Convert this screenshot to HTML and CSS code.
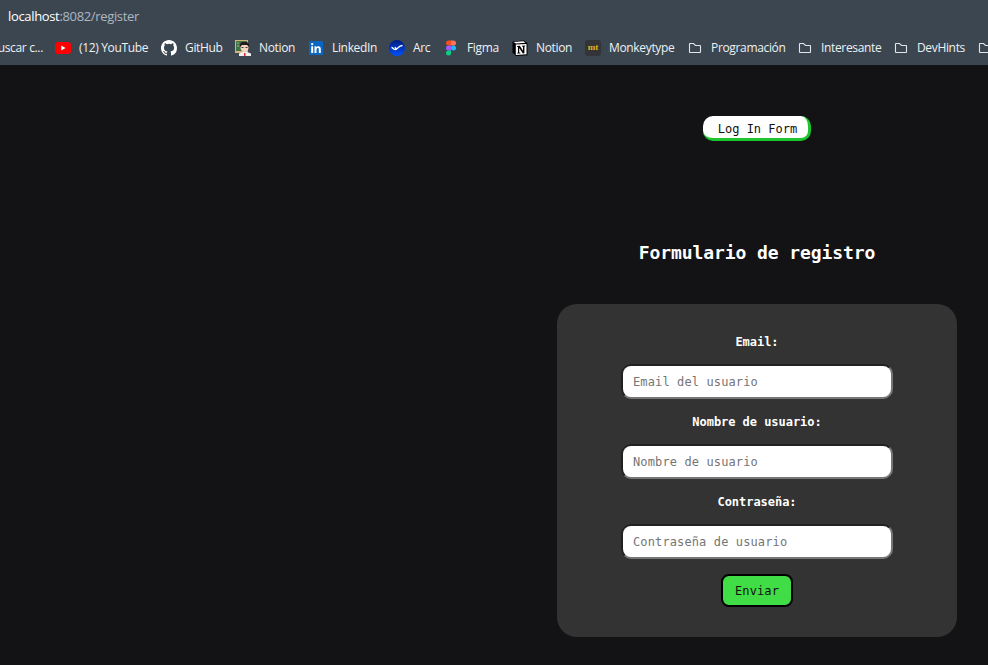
FILE: index.html
```html
<!DOCTYPE html>
<html lang="es">
<head>
<meta charset="utf-8">
<title>Formulario de registro</title>
<link rel="stylesheet" href="styles.css">
</head>
<body>
<svg width="0" height="0" class="defs"><defs><symbol id="folder" viewBox="0 0 16 16"><path d="M2.500 12V4q0-.5.5-.5h3.500l2 2H13q.5 0 .5.500V12q0 .5-.5.500H3q-.5 0-.5-.500z" fill="none" stroke="#e1e5e8" stroke-width="1.100"/></symbol></defs></svg>
<header class="browser">
  <div class="url"><b>localhost</b>:8082/register</div>
  <nav class="bookmarks">
    <span class="mark cut">uscar c...</span>
    <span class="mark"><svg viewBox="0 0 16 16"><rect y="2" width="16" height="12" rx="3" fill="#f00"/><path d="M6.300 5.500v5l4.200-2.500z" fill="#fff"/></svg><span>(12) YouTube</span></span>
    <span class="mark"><svg viewBox="0 0 16 16"><path fill="#fff" d="M8 0C3.580 0 0 3.580 0 8c0 3.540 2.290 6.530 5.470 7.590.4.070.55-.17.55-.38 0-.19-.01-.82-.01-1.490-2.010.37-2.530-.49-2.690-.94-.09-.23-.48-.94-.82-1.130-.28-.15-.68-.52-.01-.53.63-.01 1.080.58 1.230.82.72 1.210 1.870.87 2.330.66.07-.52.28-.87.51-1.070-1.780-.2-3.640-.89-3.640-3.950 0-.87.31-1.590.82-2.150-.08-.2-.36-1.020.08-2.120 0 0 .67-.21 2.200.82a7.600 7.600 0 0 1 4 0c1.530-1.040 2.200-.82 2.200-.82.44 1.100.16 1.920.08 2.120.51.56.82 1.270.82 2.150 0 3.070-1.870 3.750-3.650 3.950.29.25.54.73.54 1.480 0 1.070-.01 1.930-.01 2.200 0 .21.15.46.55.38A8 8 0 0 0 16 8c0-4.420-3.580-8-8-8z"/></svg><span>GitHub</span></span>
    <span class="mark"><svg viewBox="0 0 16 16"><path d="M0 0h13v13H0z" fill="#d6b37b"/><path d="M1 1h11v10H1z" fill="#3f7344"/><path d="M2 3h2M2 6h2" stroke="#9cb98e"/><path d="M4 16v-2.500l4-2h3l5 2V16z" fill="#f0eeee"/><circle cx="9.500" cy="7.500" r="4" fill="#f6d4bd"/><path d="M5 7V4l2-2h5l2 2v3l-2-2H7z" fill="#201c20"/><path d="M6.500 7.500h2m2 0h2" stroke="#44343a"/><path d="M9 13h1.500v3H9z" fill="#d72f3c"/></svg><span>Notion</span></span>
    <span class="mark"><svg viewBox="0 0 16 16"><rect x="1" y="1" width="14" height="14" rx="1" fill="#0a66c2"/><path d="M3.200 6.300h2V13h-2zM6.500 6.300h1.900v.9c1-1.600 4.400-1.500 4.400 1.600V13h-2V9.500c0-2.200-2.300-1.900-2.300 0V13h-2z" fill="#fff"/><circle cx="4.200" cy="4.200" r="1.150" fill="#fff"/></svg><span>LinkedIn</span></span>
    <span class="mark"><svg viewBox="0 0 16 16"><defs><linearGradient id="arc" x2="0" y2="1"><stop stop-color="#001c7c"/><stop offset="1" stop-color="#0050ff"/></linearGradient></defs><circle cx="8" cy="8" r="8" fill="url(#arc)"/><path d="M2.500 7.500c1.500 0 2 2 3.700 2C9 9.500 9 5.500 13.500 5.500M6 7l1.500 2.500" fill="none" stroke="#fff" stroke-width="1.400"/></svg><span>Arc</span></span>
    <span class="mark"><svg viewBox="0 0 16 16"><path d="M8 .5H5.500a2.500 2.500 0 0 0 0 5H8z" fill="#f24e1e"/><path d="M8 .5h2.500a2.500 2.500 0 0 1 0 5H8z" fill="#ff7262"/><path d="M8 5.500H5.500a2.500 2.500 0 0 0 0 5H8z" fill="#a259ff"/><circle cx="10.500" cy="8" r="2.500" fill="#1abcfe"/><path d="M8 10.500H5.500A2.500 2.500 0 1 0 8 13z" fill="#0acf83"/></svg><span>Figma</span></span>
    <span class="mark"><svg viewBox="0 0 16 16"><path d="M.5 1.500 12 .5l3.500 2.700v12L4 16 .5 12.500z" fill="#000"/><path d="m1.500 2.100 10-.8 2 1.500-9.500.6z" fill="#fff"/><path d="M3.800 4.500 14.500 4v10.300L3.800 15z" fill="#fff"/><path d="M5.200 6 7.800 5.800l3.200 5V6.700l-1-.2v-.7l3.300-.2v.7l-.9.3v6.700l-1.500.1-3.700-5.500v4.500l1.200.3v.7l-3.200.2v-.7l.8-.4V7l-1-.2z" fill="#000"/></svg><span>Notion</span></span>
    <span class="mark"><i class="mt">mt</i><span>Monkeytype</span></span>
    <span class="mark"><svg><use href="#folder"/></svg><span>Programación</span></span>
    <span class="mark"><svg><use href="#folder"/></svg><span>Interesante</span></span>
    <span class="mark"><svg><use href="#folder"/></svg><span>DevHints</span></span>
    <span class="mark"><svg><use href="#folder"/></svg></span>
  </nav>
</header>
<main class="page">
  <button class="login" type="button">Log In Form</button>
  <h1>Formulario de registro</h1>
  <form class="card">
    <label for="email">Email:</label>
    <input id="email" type="text" placeholder="Email del usuario">
    <label for="user">Nombre de usuario:</label>
    <input id="user" type="text" placeholder="Nombre de usuario">
    <label for="pass">Contraseña:</label>
    <input id="pass" type="password" placeholder="Contraseña de usuario">
    <button class="send" type="button">Enviar</button>
  </form>
</main>
</body>
</html>
```
FILE: styles.css
```css
* { box-sizing: border-box; }
body { margin: 0; height: 665px; background: #131315; overflow: hidden; font-family: "DejaVu Sans Mono", monospace; }
.defs { display: none; }
.browser { height: 65px; background: #3b4651; color: #eef1f3; font: 12px/16px "Open Sans", sans-serif; overflow: hidden; }
.url { padding: 8px 8px 0; height: 40px; font-size: 13px; letter-spacing: -.34px; color: #aeb7c0; }
.url b { font-weight: 400; color: #fff; }
.bookmarks { display: grid; grid-template-columns: 55px 106px 74px 73px 81px 54px 69px 73px 102px 110px 96px 84px 16px; height: 16px; width: 993px; }
.mark { display: flex; gap: 8px; white-space: nowrap; line-height: 16px; letter-spacing: -.34px; }
.cut { justify-content: flex-end; padding-right: 12px; }
.mark svg, .mt { width: 16px; height: 16px; flex: none; }
.mt { background: #323437; color: #e2b714; border-radius: 3px; font: bold 9px/15px "Liberation Serif", serif; letter-spacing: 0; text-align: center; }
.page { display: flex; flex-direction: column; align-items: center; width: 400px; margin-left: 557px; padding-top: 51px; }
.login { width: 108px; height: 25px; padding: 4px 0 0 4px; border: 0 solid #1cc42e; border-width: 0 3px 3px 0; border-radius: 10px; background: #fff; color: #111; font: 12px/18px "DejaVu Sans Mono", monospace; }
h1 { margin: 99px 0 0; height: 64px; font-size: 18px; line-height: 26px; letter-spacing: -.08px; color: #fff; }
.card { display: flex; flex-direction: column; align-items: center; width: 400px; height: 333px; padding-top: 28px; border-radius: 20px; background: #333; }
label { height: 20px; font-size: 12px; line-height: 20px; font-weight: 700; letter-spacing: -.04px; color: #fff; }
input { width: 272px; height: 35px; margin: 12px 0 13px; padding: 0 10px; border: 2px inset #767676; border-radius: 10px; background: #fff; font: 12px "DejaVu Sans Mono", monospace; letter-spacing: .12px; }
input::placeholder { color: #757575; }
.send { width: 72px; height: 33px; margin-top: 2px; padding: 0; border: 2px solid #000; border-radius: 8px; background: #40dd46; color: #111; font: 12px "DejaVu Sans Mono", monospace; letter-spacing: .12px; }
```
